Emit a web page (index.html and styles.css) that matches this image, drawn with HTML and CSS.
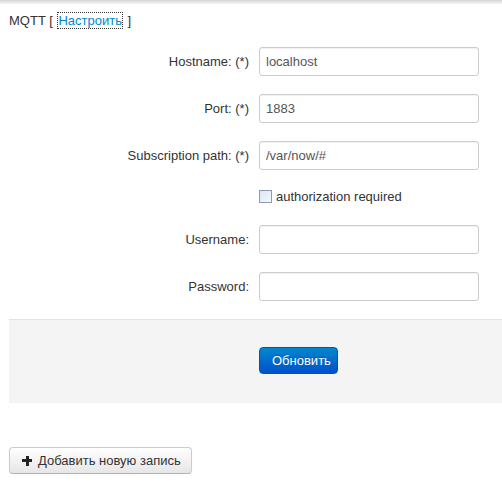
FILE: index.html
```html
<!DOCTYPE html>
<html>
<head>
    <link rel="stylesheet" href="styles.css">
    <title>MQTT</title>
</head>
<body>
    <div class="topbar"></div>
    <section class="page">
        <div class="title">MQTT [ <a href="#" class="focused">Настроить</a> ]</div>

        <form class="form-horizontal">
            <div class="row">
                <label for="hostname">Hostname: (*)</label>
                <input id="hostname" value="localhost" />
            </div>
            <div class="row">
                <label for="port">Port: (*)</label>
                <input id="port" value="1883" />
            </div>
            <div class="row">
                <label for="path">Subscription path: (*)</label>
                <input id="path" value="/var/now/#" />
            </div>
            <div class="row row-check">
                <span></span>
                <label class="check"><span class="box"></span>authorization required</label>
            </div>
            <div class="row">
                <label for="username">Username:</label>
                <input id="username" />
            </div>
            <div class="row">
                <label for="password">Password:</label>
                <input type="password" id="password" />
            </div>

            <div class="form-actions">
                <span></span>
                <button type="button" class="btn btn-primary">Обновить</button>
            </div>
        </form>

        <button type="button" class="btn btn-add"><span class="plus"></span>Добавить новую запись</button>
    </section>
</body>
</html>
```

FILE: styles.css
```css
body {
    margin: 0;
    font-family: "Liberation Sans", Arial, sans-serif;
    font-size: 13px;
    color: #333;
    background: #fff;
}

.topbar {
    height: 4px;
    background: linear-gradient(#d4d4d4, #f6f6f6);
}

.page {
    padding-left: 9px;
}

.title {
    margin-top: 9px;
    line-height: 15px;
}

.title a {
    margin: 0 2px;
    color: #0088cc;
    text-decoration: none;
}

.title a.focused {
    outline: 1px dotted #333;
}

.form-horizontal {
    margin-top: 19px;
}

.row {
    display: grid;
    grid-template-columns: 240px 220px;
    column-gap: 10px;
    align-items: center;
    margin-bottom: 18px;
}

.row > label {
    text-align: right;
}

.row input {
    box-sizing: border-box;
    height: 29px;
    padding: 4px 6px;
    border: 1px solid #ccc;
    border-radius: 3px;
    font-family: inherit;
    font-size: 13px;
    color: #555;
    box-shadow: inset 0 1px 1px rgba(0, 0, 0, 0.06);
}

.row-check {
    height: 20px;
    margin-top: -2px;
    margin-bottom: 19px;
}

.check {
    display: flex;
    align-items: center;
}

.check .box {
    box-sizing: border-box;
    width: 13px;
    height: 13px;
    margin-right: 4px;
    border: 1px solid #8a9cb0;
    background: linear-gradient(135deg, #d9e6f2, #f4f8fc);
}

.form-actions {
    display: grid;
    grid-template-columns: 240px auto;
    column-gap: 10px;
    justify-items: start;
    margin-top: 17px;
    padding: 27px 0 29px;
    border-top: 1px solid #e3e3e3;
    background: #f4f4f4;
}

.btn {
    box-sizing: border-box;
    height: 27px;
    padding: 0 12px;
    border-radius: 4px;
    font-family: inherit;
    font-size: 13px;
    white-space: nowrap;
    cursor: pointer;
}

.btn-primary {
    width: 79px;
    color: #fff;
    border: 1px solid #0055b3;
    background: linear-gradient(#0088cc, #0050cc);
    text-shadow: 0 -1px 0 rgba(0, 0, 0, 0.2);
}

.btn-add {
    display: flex;
    align-items: center;
    margin-top: 44px;
    padding-right: 10px;
    color: #333;
    border: 1px solid #ccc;
    border-bottom-color: #b3b3b3;
    background: linear-gradient(#ffffff, #e6e6e6);
    box-shadow: 0 1px 2px rgba(0, 0, 0, 0.05);
}

.plus {
    width: 10px;
    height: 10px;
    margin-right: 6px;
    background:
        linear-gradient(#222, #222) center / 10px 3px no-repeat,
        linear-gradient(#222, #222) center / 3px 10px no-repeat;
}
```
